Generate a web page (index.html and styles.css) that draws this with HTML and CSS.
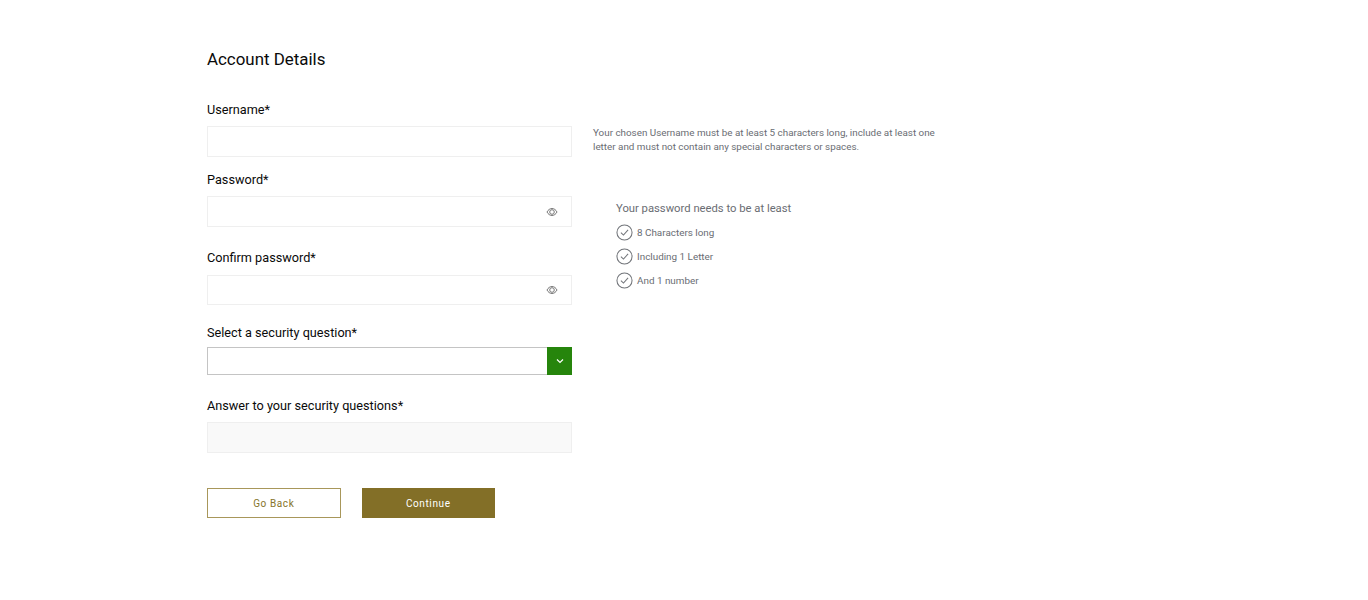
FILE: index.html
```html
<!DOCTYPE html>
<html lang="en">
<head>
<meta charset="utf-8">
<title>Account Details</title>
<link rel="stylesheet" href="styles.css">
</head>
<body>
<main class="page">
  <h1 class="title">Account Details</h1>
  <div class="columns">
    <form class="form">
      <div class="field field-username">
        <label class="label">Username*</label>
        <div class="input"></div>
      </div>
      <div class="field field-password">
        <label class="label">Password*</label>
        <div class="input">
          <svg class="eye" viewBox="0 0 12 10" aria-hidden="true"><path d="M1 5C2.2 2.8 3.9 1.500 6 1.500S9.800 2.800 11 5C9.800 7.200 8.100 8.500 6 8.500S2.200 7.200 1 5Z"/><circle cx="6" cy="5" r="2.300"/></svg>
        </div>
      </div>
      <div class="field field-confirm">
        <label class="label">Confirm password*</label>
        <div class="input">
          <svg class="eye" viewBox="0 0 12 10" aria-hidden="true"><path d="M1 5C2.2 2.8 3.9 1.500 6 1.500S9.800 2.800 11 5C9.800 7.200 8.100 8.500 6 8.500S2.200 7.200 1 5Z"/><circle cx="6" cy="5" r="2.300"/></svg>
        </div>
      </div>
      <div class="field field-question">
        <label class="label">Select a security question*</label>
        <div class="select">
          <span class="select-value"></span>
          <span class="select-arrow"><svg viewBox="0 0 8 6" aria-hidden="true"><path d="M1 1.500 4 4.500 7 1.500"/></svg></span>
        </div>
      </div>
      <div class="field field-answer">
        <label class="label">Answer to your security questions*</label>
        <div class="input input-disabled"></div>
      </div>
      <div class="actions">
        <button type="button" class="btn btn-outline">Go Back</button>
        <button type="button" class="btn btn-solid">Continue</button>
      </div>
    </form>
    <aside class="aside">
      <p class="hint">Your chosen Username must be at least 5 characters long, include at least one letter and must not contain any special characters or spaces.</p>
      <div class="rules">
        <p class="rules-title">Your password needs to be at least</p>
        <ul class="rule-list">
          <li class="rule"><svg class="check" viewBox="0 0 18 18" aria-hidden="true"><circle cx="9" cy="9" r="8"/><path d="M5.200 9.200 7.900 11.700 12.800 6.300"/></svg>8 Characters long</li>
          <li class="rule"><svg class="check" viewBox="0 0 18 18" aria-hidden="true"><circle cx="9" cy="9" r="8"/><path d="M5.200 9.200 7.900 11.700 12.800 6.300"/></svg>Including 1 Letter</li>
          <li class="rule"><svg class="check" viewBox="0 0 18 18" aria-hidden="true"><circle cx="9" cy="9" r="8"/><path d="M5.200 9.200 7.900 11.700 12.800 6.300"/></svg>And 1 number</li>
        </ul>
      </div>
    </aside>
  </div>
</main>
</body>
</html>
```

FILE: styles.css
```css
* { box-sizing: border-box; }
html, body { margin: 0; background: #fff; }
body { font-family: Roboto, "Liberation Sans", sans-serif; color: #0a0a0a; height: 600px; overflow: hidden; }
.page { padding: 49px 0 0 207px; }
.title { margin: 0; font-size: 16.9px; line-height: 20px; font-weight: 400; color: #0a0a0a; }
.columns { display: flex; margin-top: 32px; }
.form { width: 365px; flex: none; }
.label { display: block; font-size: 12.7px; line-height: 18px; color: #0a0a0a; }
.field-password { margin-top: 14px; }
.field-confirm { margin-top: 22px; }
.field-question { margin-top: 19px; }
.field-answer { margin-top: 22px; }
.input { display: flex; align-items: center; justify-content: flex-end; height: 31px; margin-top: 7px; padding-right: 14px; border: 1px solid #efefef; background: #fff; }
.field-confirm .input { margin-top: 8px; height: 30px; }
.input-disabled { background: #f9f9f9; }
.eye { width: 12px; height: 10px; margin-right: -1px; fill: none; stroke: #777; stroke-width: 1; }
.select { display: flex; height: 28px; margin-top: 5px; border: 1px solid #c4c4c4; border-right: 0; background: #fff; }
.select-value { flex: 1; }
.select-arrow { display: flex; align-items: center; justify-content: center; width: 25px; margin: -1px 0; background: #26850c; }
.select-arrow svg { width: 8px; height: 6px; fill: none; stroke: #fff; stroke-width: 1.2; }
.actions { display: flex; gap: 21px; margin-top: 35px; }
.btn { width: 133.5px; height: 30px; padding: 1px 0 0; font: 400 10px/1 Roboto, "Liberation Sans", sans-serif; letter-spacing: .6px; cursor: pointer; }
.btn-outline { background: #fff; border: 1px solid #a8975a; color: #86742a; }
.btn-solid { background: #836f27; border: 1px solid #836f27; color: #fff; }
.aside { margin-left: 21px; width: 350px; padding-top: 25px; }
.hint { margin: 0; font-size: 9.85px; line-height: 14px; color: #6a6d73; }
.rules { margin: 47px 0 0 23px; }
.rules-title { margin: 0; font-size: 11.25px; line-height: 16px; color: #6a6d73; }
.rule-list { margin: 3px 0 0; padding: 0; list-style: none; }
.rule { display: flex; align-items: center; gap: 4px; height: 24px; font-size: 9.9px; color: #6a6d73; }
.check { width: 17px; height: 17px; fill: none; stroke: #72757a; stroke-width: 1.1; flex: none; }
```
